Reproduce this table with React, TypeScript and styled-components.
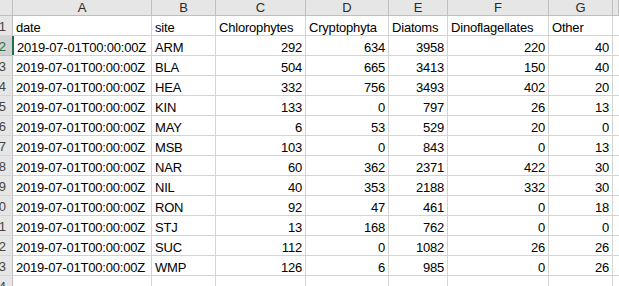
import styled, { createGlobalStyle } from "styled-components";

const GlobalStyle = createGlobalStyle`
  html, body {
    margin: 0;
    padding: 0;
    background: #fff;
    overflow: hidden;
  }
  body {
    font-family: "Liberation Sans", Arial, sans-serif;
  }
`;

interface Column {
  letter: string;
  width: number;
}

// H is only a sliver at the right edge, so its letter is off-screen
const columns: Column[] = [
  { letter: "A", width: 139 },
  { letter: "B", width: 64 },
  { letter: "C", width: 90 },
  { letter: "D", width: 83 },
  { letter: "E", width: 59 },
  { letter: "F", width: 101 },
  { letter: "G", width: 64 },
  { letter: "", width: 6 },
];

const headings = ["date", "site", "Chlorophytes", "Cryptophyta", "Diatoms", "Dinoflagellates", "Other"];

const rows: [string, number, number, number, number, number][] = [
  ["ARM", 292, 634, 3958, 220, 40],
  ["BLA", 504, 665, 3413, 150, 40],
  ["HEA", 332, 756, 3493, 402, 20],
  ["KIN", 133, 0, 797, 26, 13],
  ["MAY", 6, 53, 529, 20, 0],
  ["MSB", 103, 0, 843, 0, 13],
  ["NAR", 60, 362, 2371, 422, 30],
  ["NIL", 40, 353, 2188, 332, 30],
  ["RON", 92, 47, 461, 0, 18],
  ["STJ", 13, 168, 762, 0, 0],
  ["SUC", 112, 0, 1082, 26, 26],
  ["WMP", 126, 6, 985, 0, 26],
];

const Sheet = styled.div`
  width: 619px;
  height: 286px;
  overflow: hidden;
  display: flex;
  flex-direction: column;
`;

const Row = styled.div<{ $height: number }>`
  display: flex;
  flex: none;
  height: ${(p) => p.$height}px;
`;

const Corner = styled.div`
  flex: none;
  width: 13px;
  box-sizing: border-box;
  background: #e6e6e6;
  border-right: 1px solid #bfbfbf;
  border-bottom: 1px solid #bfbfbf;
`;

const ColHeader = styled.div<{ $width: number }>`
  flex: none;
  width: ${(p) => p.$width}px;
  box-sizing: border-box;
  background: #e6e6e6;
  border-right: 1px solid #bfbfbf;
  border-bottom: 1px solid #bfbfbf;
  color: #2a2a2a;
  font-size: 13px;
  line-height: 15px;
  text-align: center;
`;

const RowHeader = styled.div<{ $active?: boolean }>`
  flex: none;
  width: 13px;
  box-sizing: border-box;
  overflow: hidden;
  background: ${(p) => (p.$active ? "#d2d2d2" : "#e6e6e6")};
  color: ${(p) => (p.$active ? "#217346" : "#444")};
  border-right: 1px solid ${(p) => (p.$active ? "#217346" : "#bfbfbf")};
  border-bottom: 1px solid ${(p) => (p.$active ? "#bfbfbf" : "#d4d4d4")};
  font-size: 13px;
  line-height: 15px;
  display: flex;
  align-items: flex-end;
  justify-content: flex-end;
  padding-right: 6px;
  padding-bottom: 1px;
  white-space: nowrap;
`;

const Cell = styled.div<{ $width: number; $align?: "left" | "right" }>`
  flex: none;
  width: ${(p) => p.$width}px;
  box-sizing: border-box;
  border-right: 1px solid #d4d4d4;
  border-bottom: 1px solid #d4d4d4;
  display: flex;
  align-items: flex-end;
  justify-content: ${(p) => (p.$align === "right" ? "flex-end" : "flex-start")};
  padding: 0 3px;
  font-size: 13px;
  line-height: 15px;
  letter-spacing: -0.2px;
  color: #000;
  white-space: nowrap;
  overflow: hidden;
`;

const Edge = styled.div`
  flex: none;
  width: 2px;
  margin-left: -1px;
  background: #217346;
  border-bottom: 1px solid #d4d4d4;
  box-sizing: border-box;
`;

export default function App() {
  const body: (string | number)[][] = [
    headings,
    ...rows.map((r) => ["2019-07-01T00:00:00Z", ...r]),
    [],
  ];

  return (
    <>
      <GlobalStyle />
      <Sheet>
        <Row $height={16}>
          <Corner />
          {columns.map((c, ci) => (
            <ColHeader key={ci} $width={c.width}>
              {c.letter}
            </ColHeader>
          ))}
        </Row>
        {body.map((values, i) => {
          const active = i === 1;
          return (
            <Row key={i} $height={20}>
              <RowHeader $active={active}>{i + 1}</RowHeader>
              {active && <Edge />}
              {columns.map((c, ci) => {
                const v = values[ci];
                const numeric = typeof v === "number";
                const width = active && ci === 0 ? c.width - 1 : c.width;
                return (
                  <Cell key={ci} $width={width} $align={numeric ? "right" : "left"}>
                    {v ?? ""}
                  </Cell>
                );
              })}
            </Row>
          );
        })}
      </Sheet>
    </>
  );
}
